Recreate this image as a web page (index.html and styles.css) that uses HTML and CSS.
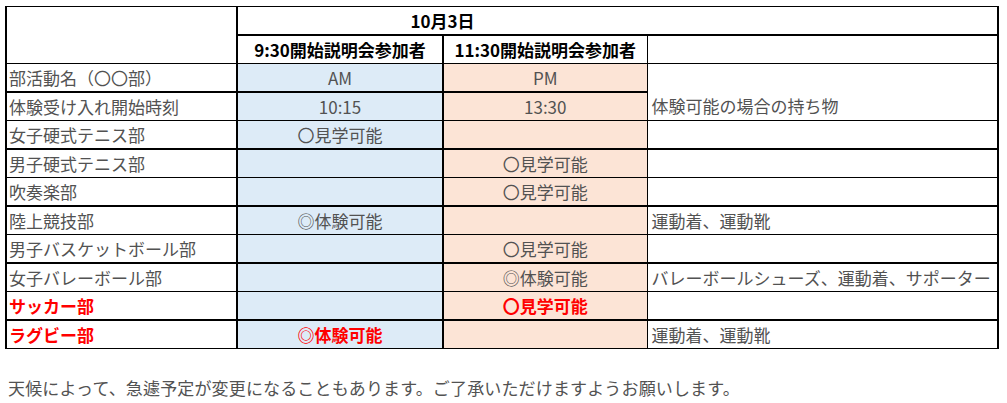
FILE: index.html
```html
<!DOCTYPE html>
<html lang="ja">
<head>
<meta charset="utf-8">
<title>部活動 説明会</title>
<link rel="stylesheet" href="styles.css">
</head>
<body>
<div class="page">
  <table class="sheet">
    <colgroup>
      <col class="w1"><col class="w2"><col class="w3"><col class="w4">
    </colgroup>
    <tr class="head1">
      <td class="lbl blank" rowspan="2"></td>
      <td class="date" colspan="2">10月3日</td>
      <td class="note top-empty"></td>
    </tr>
    <tr class="head2">
      <th class="am-h">9:30開始説明会参加者</th>
      <th class="pm-h">11:30開始説明会参加者</th>
      <td class="note"></td>
    </tr>
    <tr class="thick">
      <td class="lbl">部活動名（〇〇部）</td>
      <td class="am">AM</td>
      <td class="pm">PM</td>
      <td class="note merged" rowspan="2">体験可能の場合の持ち物</td>
    </tr>
    <tr>
      <td class="lbl">体験受け入れ開始時刻</td>
      <td class="am">10:15</td>
      <td class="pm">13:30</td>
    </tr>
    <tr class="thick">
      <td class="lbl">女子硬式テニス部</td>
      <td class="am">〇見学可能</td>
      <td class="pm"></td>
      <td class="note"></td>
    </tr>
    <tr>
      <td class="lbl">男子硬式テニス部</td>
      <td class="am"></td>
      <td class="pm">〇見学可能</td>
      <td class="note"></td>
    </tr>
    <tr class="thick">
      <td class="lbl">吹奏楽部</td>
      <td class="am"></td>
      <td class="pm">〇見学可能</td>
      <td class="note"></td>
    </tr>
    <tr>
      <td class="lbl">陸上競技部</td>
      <td class="am">◎体験可能</td>
      <td class="pm"></td>
      <td class="note">運動着、運動靴</td>
    </tr>
    <tr class="thick">
      <td class="lbl">男子バスケットボール部</td>
      <td class="am"></td>
      <td class="pm">〇見学可能</td>
      <td class="note"></td>
    </tr>
    <tr>
      <td class="lbl">女子バレーボール部</td>
      <td class="am"></td>
      <td class="pm">◎体験可能</td>
      <td class="note">バレーボールシューズ、運動着、サポーター</td>
    </tr>
    <tr class="thick red">
      <td class="lbl">サッカー部</td>
      <td class="am"></td>
      <td class="pm">〇見学可能</td>
      <td class="note"></td>
    </tr>
    <tr class="red">
      <td class="lbl">ラグビー部</td>
      <td class="am">◎体験可能</td>
      <td class="pm"></td>
      <td class="note">運動着、運動靴</td>
    </tr>
  </table>
  <p class="notice">天候によって、急遽予定が変更になることもあります。ご了承いただけますようお願いします。</p>
</div>
</body>
</html>
```
FILE: styles.css
```css
html, body {
  margin: 0;
  background: #ffffff;
}

body {
  font-family: "Noto Sans CJK JP", "Noto Sans", sans-serif;
  font-size: 17px;
  color: #525252;
}

.page {
  padding: 6px 0 0 5px;
}

.sheet {
  border-collapse: collapse;
  table-layout: fixed;
  width: 994px;
}

.w1 { width: 231px; }
.w2 { width: 206px; }
.w3 { width: 204px; }
.w4 { width: 351px; }

.sheet tr {
  height: 28.5px;
}

.sheet td,
.sheet th {
  border: 1px solid #000000;
  padding: 0 2px;
  line-height: 20px;
  vertical-align: middle;
  white-space: nowrap;
  overflow: hidden;
  font-weight: normal;
  text-align: left;
}

.sheet .lbl {
  border-left: 2px solid #000000;
  border-right: 2px solid #000000;
}

.sheet .am,
.sheet .am-h {
  border-right: 2px solid #000000;
}

.sheet .note {
  border-right: 2px solid #000000;
  padding-left: 4px;
}

.sheet .am {
  background: #ddebf7;
  text-align: center;
}

.sheet .pm {
  background: #fce4d6;
  text-align: center;
}

.sheet .am-h,
.sheet .pm-h,
.sheet .date {
  font-weight: bold;
  color: #000000;
  text-align: center;
}

.head1 .date {
  border-right: none;
  border-bottom: 2px solid #000000;
}

.head1 .top-empty {
  border-left: none;
  border-bottom: 2px solid #000000;
}

.sheet .merged {
  vertical-align: bottom;
  padding-bottom: 4px;
}

.thick td {
  border-bottom: 2px solid #000000;
}

.thick .merged {
  border-bottom: 1px solid #000000;
}

.red .lbl,
.red .am,
.red .pm {
  color: #ff0000;
  font-weight: bold;
}

.notice {
  margin: 27px 0 0 3px;
  line-height: 24px;
  letter-spacing: 0.15px;
}
```
